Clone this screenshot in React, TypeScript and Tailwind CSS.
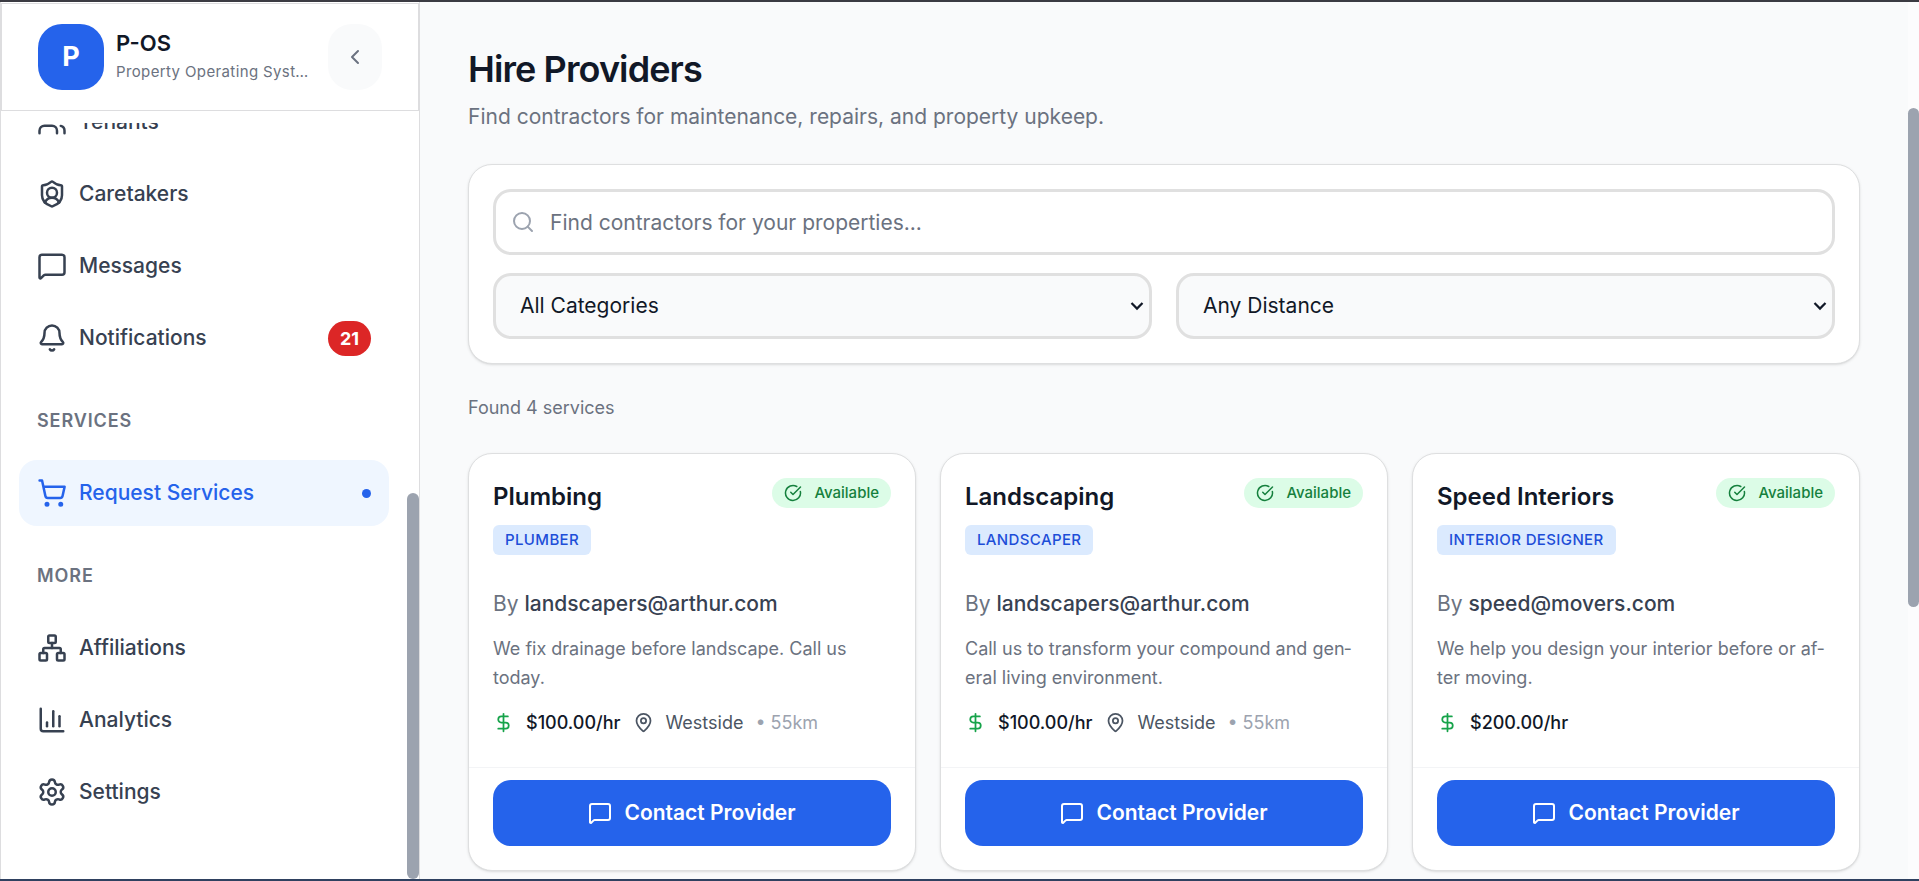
import type { ReactNode } from 'react';
import {
  Bell,
  ChartColumn,
  ChevronLeft,
  CircleCheckBig,
  DollarSign,
  MapPin,
  MessageSquare,
  Network,
  Search,
  Settings,
  ShieldUser,
  ShoppingCart,
  Users,
  type LucideIcon,
} from 'lucide-react';

type NavItemProps = {
  icon: LucideIcon;
  label: string;
  active?: boolean;
  badge?: number;
};

function NavItem({ icon: Icon, label, active = false, badge }: NavItemProps) {
  const tone = active ? 'bg-[#eff6ff] text-[#2563eb]' : 'text-[#374151]';
  return (
    <a
      href="#"
      aria-current={active ? 'page' : undefined}
      className={`flex h-[66px] shrink-0 items-center gap-3 rounded-[18px] px-[18px] text-[21px] font-medium ${tone}`}
    >
      <Icon size={30} strokeWidth={2} className="shrink-0" />
      <span className="grow">{label}</span>
      {badge !== undefined && (
        <span className="flex h-[35px] items-center rounded-full bg-[#dc2626] px-3 text-[18px] font-bold text-white">
          {badge}
        </span>
      )}
      {active && <span className="size-[9px] rounded-full bg-[#2563eb]" />}
    </a>
  );
}

function NavHeading({ children }: { children: ReactNode }) {
  return (
    <h2 className="mt-[30px] mb-5 shrink-0 px-[18px] text-[18px] leading-[27px] font-semibold tracking-wider text-[#6b7280]">
      {children}
    </h2>
  );
}

function Sidebar() {
  return (
    <aside className="flex w-[420px] shrink-0 flex-col border-x border-[#dddddf] bg-white pt-px">
      <header className="flex shrink-0 items-center gap-3 border border-[#dddddf] px-9 py-5">
        <div className="flex size-[66px] shrink-0 items-center justify-center rounded-[24px] bg-[#2563eb] text-[27px] font-bold text-white">
          P
        </div>
        <div className="min-w-0 grow">
          <p className="text-[22px] leading-[28px] font-semibold text-[#111827]">P-OS</p>
          <p className="mt-0.5 truncate text-[15px] leading-[26px] tracking-wide text-[#6b7280]">
            Property Operating System
          </p>
        </div>
        <button
          type="button"
          aria-label="Collapse sidebar"
          className="flex h-[66px] w-[54px] shrink-0 items-center justify-center rounded-[24px] bg-[#f9fafb] text-[#6b7280]"
        >
          <ChevronLeft size={24} />
        </button>
      </header>
      <div className="flex min-h-0 grow">
        <nav className="mt-3 flex grow flex-col justify-end gap-1.5 overflow-hidden px-[18px] pb-[54px]">
          <NavItem icon={Users} label="Tenants" />
          <NavItem icon={ShieldUser} label="Caretakers" />
          <NavItem icon={MessageSquare} label="Messages" />
          <NavItem icon={Bell} label="Notifications" badge={21} />
          <NavHeading>SERVICES</NavHeading>
          <NavItem icon={ShoppingCart} label="Request Services" active />
          <NavHeading>MORE</NavHeading>
          <NavItem icon={Network} label="Affiliations" />
          <NavItem icon={ChartColumn} label="Analytics" />
          <NavItem icon={Settings} label="Settings" />
        </nav>
        <div className="flex w-3 shrink-0 flex-col" aria-hidden="true">
          <div className="grow-[382]" />
          <div className="grow-[386] rounded-full bg-[#9ca3af]" />
        </div>
      </div>
    </aside>
  );
}

function FilterSelect({ label, options }: { label: string; options: string[] }) {
  return (
    <div className="relative">
      <select
        aria-label={label}
        className="h-[66px] w-full appearance-none rounded-[18px] border-3 border-[#e0e0e0] bg-[#f9fafb] px-6 text-[21px] text-[#111827]"
      >
        {options.map((option) => (
          <option key={option}>{option}</option>
        ))}
      </select>
      <svg
        viewBox="0 0 14 10"
        className="pointer-events-none absolute top-1/2 right-2 h-2.5 w-3.5 -translate-y-1/2 text-[#111827]"
        fill="none"
        stroke="currentColor"
        strokeWidth="2.2"
      >
        <path d="M1.5 2 7 7.6 12.5 2" />
      </svg>
    </div>
  );
}

type Service = {
  title: string;
  category: string;
  provider: string;
  description: string;
  price: string;
  location?: string;
  distance?: string;
};

const services: Service[] = [
  {
    title: 'Plumbing',
    category: 'PLUMBER',
    provider: 'landscapers@arthur.com',
    description: 'We fix drainage before landscape. Call us today.',
    price: '$100.00/hr',
    location: 'Westside',
    distance: '55km',
  },
  {
    title: 'Landscaping',
    category: 'LANDSCAPER',
    provider: 'landscapers@arthur.com',
    description: 'Call us to transform your compound and gen\u00ADeral living environment.',
    price: '$100.00/hr',
    location: 'Westside',
    distance: '55km',
  },
  {
    title: 'Speed Interiors',
    category: 'INTERIOR DESIGNER',
    provider: 'speed@movers.com',
    description: 'We help you design your interior before or af\u00ADter moving.',
    price: '$200.00/hr',
  },
];

function ServiceCard({ service }: { service: Service }) {
  return (
    <article className="flex flex-col rounded-[24px] border border-[#dedfe0] bg-white shadow-sm">
      <div className="grow px-6 pt-6 pb-[31px]">
        <div className="flex items-start justify-between gap-3">
          <div>
            <h3 className="mt-1 text-[24px] leading-[30px] font-semibold text-[#111827]">{service.title}</h3>
            <span className="mt-[13px] inline-flex h-[30px] items-center rounded-md bg-[#dbeafe] px-3 text-[15px] font-medium tracking-wide text-[#1d4ed8]">
              {service.category}
            </span>
          </div>
          <span className="flex h-[30px] items-center gap-3 rounded-full bg-[#dcfce7] px-3 text-[15px] font-medium text-[#15803d]">
            <CircleCheckBig size={18} />
            Available
          </span>
        </div>
        <p className="mt-[34px] text-[21px] leading-[30px] text-[#6b7280]">
          By <span className="font-medium text-[#374151]">{service.provider}</span>
        </p>
        <p className="mt-[15px] text-[18px] leading-[29px] hyphens-manual text-[#6b7280]">{service.description}</p>
        <div className="mt-[17px] flex items-center gap-3 text-[18px] leading-[27px]">
          <DollarSign size={21} className="text-[#16a34a]" />
          <span className="font-medium text-[#111827]">{service.price}</span>
          {service.location && (
            <>
              <MapPin size={21} className="text-[#4b5563]" />
              <span className="text-[#4b5563]">{service.location}</span>
              <span className="text-[#9ca3af]">• {service.distance}</span>
            </>
          )}
        </div>
      </div>
      <div className="border-t border-[#f3f4f6] px-6 pt-3 pb-6">
        <button
          type="button"
          className="flex h-[66px] w-full items-center justify-center gap-3 rounded-[18px] bg-[#2563eb] text-[21px] font-semibold text-white"
        >
          <MessageSquare size={24} />
          Contact Provider
        </button>
      </div>
    </article>
  );
}

export default function App() {
  return (
    <div className="flex h-screen overflow-hidden border-t-2 border-b-2 border-t-[#3b3b42] border-b-[#2f4160] bg-[#f9fafb] font-['Inter',sans-serif]">
      <Sidebar />
      <main className="min-w-0 grow overflow-hidden px-12 pt-[45px]">
        <h1 className="text-[36px] leading-[45px] font-semibold tracking-tight text-[#111827]">Hire Providers</h1>
        <p className="mt-2.5 text-[21px] leading-[30px] text-[#6b7280]">
          Find contractors for maintenance, repairs, and property upkeep.
        </p>
        <section className="mt-8 rounded-[24px] border border-[#dedfe0] bg-white p-6 shadow-sm">
          <div className="relative">
            <Search size={24} className="absolute top-1/2 left-[18px] -translate-y-1/2 text-[#9ca3af]" />
            <input
              type="search"
              aria-label="Find contractors"
              placeholder="Find contractors for your properties..."
              className="h-[66px] w-full rounded-[18px] border-3 border-[#e0e0e0] pr-6 pl-[54px] text-[21px] text-[#111827] placeholder:text-[#6b7280]"
            />
          </div>
          <div className="mt-[18px] grid grid-cols-2 gap-6">
            <FilterSelect label="Category" options={['All Categories', 'Plumber', 'Landscaper', 'Interior Designer']} />
            <FilterSelect label="Distance" options={['Any Distance', 'Within 10km', 'Within 50km']} />
          </div>
        </section>
        <p className="mt-[30px] text-[18px] leading-[27px] text-[#6b7280]">Found 4 services</p>
        <div className="mt-8 grid grid-cols-3 gap-6">
          {services.map((service) => (
            <ServiceCard key={service.title} service={service} />
          ))}
        </div>
      </main>
      <div className="flex w-[11px] shrink-0 flex-col bg-[#fcfcfd]" aria-hidden="true">
        <div className="grow-[106]" />
        <div className="grow-[499] rounded-full bg-[#9ca3af]" />
        <div className="grow-[272]" />
      </div>
    </div>
  );
}
